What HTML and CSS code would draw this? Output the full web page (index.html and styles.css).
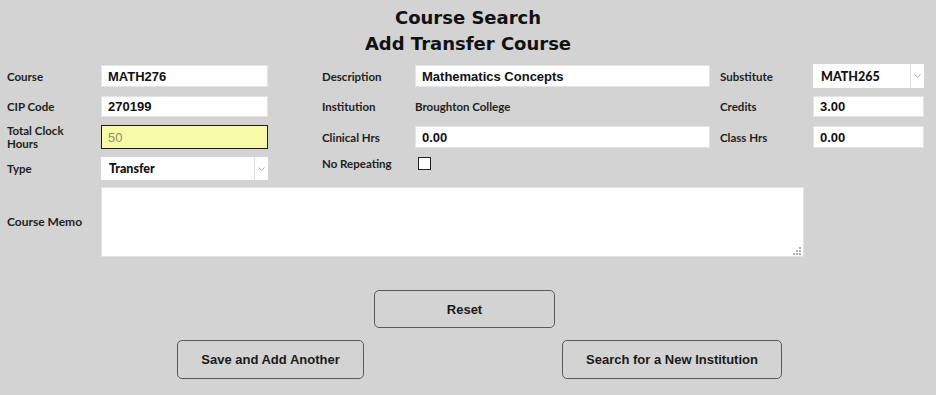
FILE: index.html
```html
<!DOCTYPE html>
<html>

<head>
    <meta name="viewport" content="width=device-width,initial-scale=1.0">
    <title>Course Search</title>
    <link rel="stylesheet" href="styles.css">
</head>

<body>

    <h1 class="title">Course Search<br>Add Transfer Course</h1>

    <form class="course-form">
        <div class="grid">
            <label class="lbl">Course</label>
            <input class="field" type="text" value="MATH276">
            <label class="lbl lbl-mid">Description</label>
            <input class="field" type="text" value="Mathematics Concepts">
            <label class="lbl lbl-right">Substitute</label>
            <div class="select select-tall">
                <select>
                    <option>MATH265</option>
                </select>
                <span class="select-arrow">
                    <svg width="7" height="4" viewBox="0 0 7 4"><path d="M0.5 0.5 L3.5 3.3 L6.5 0.5" fill="none" stroke="#a8a8a8" stroke-width="1"/></svg>
                </span>
            </div>

            <label class="lbl">CIP Code</label>
            <input class="field field-short" type="text" value="270199">
            <label class="lbl lbl-mid">Institution</label>
            <span class="static">Broughton College</span>
            <label class="lbl lbl-right">Credits</label>
            <input class="field field-short" type="text" value="3.00">

            <label class="lbl lbl-wrap">Total Clock Hours</label>
            <input class="field field-hours" type="text" value="50">
            <label class="lbl lbl-mid">Clinical Hrs</label>
            <input class="field" type="text" value="0.00">
            <label class="lbl lbl-right">Class Hrs</label>
            <input class="field" type="text" value="0.00">

            <label class="lbl">Type</label>
            <div class="select">
                <select>
                    <option>Transfer</option>
                </select>
                <span class="select-arrow">
                    <svg width="7" height="4" viewBox="0 0 7 4"><path d="M0.5 0.5 L3.5 3.3 L6.5 0.5" fill="none" stroke="#a8a8a8" stroke-width="1"/></svg>
                </span>
            </div>
            <label class="lbl lbl-mid lbl-top">No Repeating</label>
            <input class="check" type="checkbox">
        </div>

        <div class="memo-row">
            <label class="lbl memo-lbl">Course Memo</label>
            <div class="memo-box">
                <textarea class="memo"></textarea>
                <svg class="grip" width="8" height="8" viewBox="0 0 8 8">
                    <rect x="6" y="0" width="2" height="2" fill="#b0b0b0"/>
                    <rect x="3" y="3" width="2" height="2" fill="#b0b0b0"/>
                    <rect x="6" y="3" width="2" height="2" fill="#b0b0b0"/>
                    <rect x="0" y="6" width="2" height="2" fill="#b0b0b0"/>
                    <rect x="3" y="6" width="2" height="2" fill="#b0b0b0"/>
                    <rect x="6" y="6" width="2" height="2" fill="#b0b0b0"/>
                </svg>
            </div>
        </div>

        <div class="actions">
            <div class="action-row action-reset">
                <button type="button" class="btn btn-reset">Reset</button>
            </div>
            <div class="action-row action-main">
                <button type="button" class="btn btn-save">Save and Add Another</button>
                <button type="button" class="btn btn-search">Search for a New Institution</button>
            </div>
        </div>
    </form>

</body>

</html>
```

FILE: styles.css
```css
body {
    margin: 0;
    background-color: #d3d3d3;
    font-family: Lato, "Liberation Sans", sans-serif;
    color: #1c1c1c;
}

.title {
    margin: 0;
    padding-top: 5px;
    text-align: center;
    font-family: "DejaVu Sans", sans-serif;
    font-size: 18px;
    font-weight: bold;
    line-height: 26px;
    color: #111;
}

.course-form {
    margin-top: 7px;
}

.grid {
    display: grid;
    grid-template-columns: 94px 167px 147px 295px 103px 111px;
    grid-template-rows: 24px 21px 24px 23px;
    row-gap: 8px;
    align-items: center;
    padding-left: 7px;
}

.lbl {
    font-size: 11.5px;
    font-weight: bold;
    line-height: 13px;
    color: #1e1e1e;
}

.lbl-mid {
    padding-left: 54px;
}

.lbl-right {
    padding-left: 10px;
}

.lbl-wrap {
    padding-right: 20px;
}

.lbl-top {
    align-self: start;
    padding-top: 0;
}

.static {
    font-size: 11.5px;
    font-weight: bold;
    color: #1e1e1e;
}

.field {
    box-sizing: border-box;
    height: 22px;
    margin: 0;
    padding: 0 6px;
    border: 1px solid #e4e4e4;
    background-color: #fff;
    font-family: "Liberation Sans", Arial, sans-serif;
    font-size: 13px;
    font-weight: bold;
    color: #111;
    outline: none;
}

.field-short {
    height: 21px;
}

.field-hours {
    height: 24px;
    border: 1px solid #1c1c28;
    background-color: #f7fba8;
    font-weight: normal;
    color: #8e8e62;
}

.select {
    display: flex;
    height: 23px;
    background-color: #fff;
}

.select-tall {
    height: 24px;
}

.select select {
    flex: 1;
    min-width: 0;
    margin: 0;
    padding: 0 0 0 8px;
    border: 0;
    background: transparent;
    appearance: none;
    -webkit-appearance: none;
    font-family: Lato, sans-serif;
    font-size: 12.5px;
    font-weight: 900;
    color: #111;
    outline: none;
}

.select-arrow {
    width: 13px;
    display: flex;
    align-items: center;
    justify-content: center;
    border-left: 1px solid #e2e2e2;
}

.check {
    appearance: none;
    -webkit-appearance: none;
    align-self: start;
    width: 13px;
    height: 13px;
    margin: 0 0 0 3px;
    border: 1px solid #222;
    background-color: #fff;
}

.memo-row {
    display: flex;
    align-items: center;
    margin-top: 7px;
    padding-left: 7px;
}

.memo-lbl {
    width: 94px;
    font-size: 12px;
    padding-bottom: 1px;
}

.memo-box {
    position: relative;
    width: 703px;
    height: 70px;
}

.memo {
    box-sizing: border-box;
    width: 100%;
    height: 100%;
    margin: 0;
    border: 1px solid #e2e2e2;
    background-color: #fff;
    resize: none;
    outline: none;
    display: block;
}

.grip {
    position: absolute;
    right: 3px;
    bottom: 2px;
}

.actions {
    margin-top: 33px;
}

.action-row {
    display: flex;
}

.action-reset {
    padding-left: 374px;
}

.action-main {
    margin-top: 12px;
    padding-left: 177px;
    gap: 198px;
}

.btn {
    box-sizing: border-box;
    height: 39px;
    border: 1px solid #5a5a5a;
    border-radius: 5px;
    background-color: transparent;
    font-family: "Liberation Sans", Arial, sans-serif;
    font-size: 13px;
    font-weight: bold;
    color: #1a1a1a;
    cursor: pointer;
}

.btn-reset {
    width: 181px;
    height: 38px;
}

.btn-save {
    width: 187px;
}

.btn-search {
    width: 220px;
}
```
